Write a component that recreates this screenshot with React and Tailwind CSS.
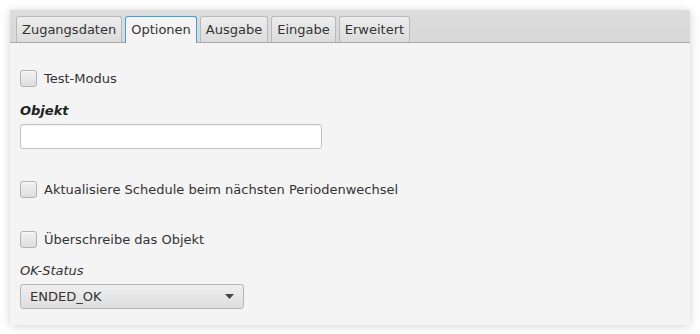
import { useState } from 'react';

const tabs = ['Zugangsdaten', 'Optionen', 'Ausgabe', 'Eingabe', 'Erweitert'];

function Checkbox({ label, className = '' }) {
  const [checked, setChecked] = useState(false);
  return (
    <label className={`flex items-center gap-[7px] cursor-pointer ${className}`}>
      <span
        onClick={() => setChecked(!checked)}
        className="w-[17px] h-[17px] rounded-[3px] border border-[#b2b2b2] bg-gradient-to-b from-[#f2f2f2] to-[#dedede] shadow-[inset_0_1px_0_#fafafa]"
      />
      <span className="text-[13px] leading-[16px] text-[#333]">{label}</span>
    </label>
  );
}

export default function App() {
  const [active, setActive] = useState('Optionen');

  return (
    <div className="w-[700px] h-[334px] bg-white p-[10px] font-['DejaVu_Sans',sans-serif]">
      <div className="h-[315px] w-[680px] bg-[#f4f4f4] shadow-[0_1px_9px_rgba(0,0,0,0.18)] flex flex-col">
        {/* TAB HEADER */}
        <div className="h-[33px] bg-gradient-to-b from-[#dddddd] to-[#d8d8d8] border-b border-[#a9a9a9] flex items-end pl-[6px] gap-[3px]">
          {tabs.map((t) => (
            <button
              key={t}
              onClick={() => setActive(t)}
              className={`h-[26px] px-[5px] rounded-t-[3px] text-[13px] leading-[16px] text-[#333] border ${
                active === t
                  ? 'bg-[#f4f4f4] border-[#39a0e4] border-b-0 -mb-px h-[27px]'
                  : 'bg-gradient-to-b from-[#ededed] to-[#dcdcdc] border-[#b9b9b9] border-b-0'
              }`}
            >
              {t}
            </button>
          ))}
        </div>

        {/* CONTENT */}
        <div className="flex flex-col items-start pl-[10px]">
          <Checkbox label="Test-Modus" className="mt-[27px]" />

          <div className="mt-[16px] text-[13px] leading-[16px] font-bold italic text-[#222]">Objekt</div>
          <input
            type="text"
            className="mt-[5px] w-[302px] h-[25px] bg-white border border-[#c2c2c2] rounded-[3px] shadow-[inset_0_1px_1px_rgba(0,0,0,0.06)] outline-none px-2 text-[13px]"
          />

          <Checkbox label="Aktualisiere Schedule beim nächsten Periodenwechsel" className="mt-[32px]" />
          <Checkbox label="Überschreibe das Objekt" className="mt-[33px]" />

          <div className="mt-[15px] text-[13px] leading-[16px] italic text-[#333]">OK-Status</div>
          <div className="mt-[5px] w-[224px] h-[25px] rounded-[3px] border border-[#b6b6b6] bg-gradient-to-b from-[#efefef] to-[#dedede] flex items-center justify-between pl-[9px] pr-[9px]">
            <span className="text-[13px] leading-[16px] text-[#333]">ENDED_OK</span>
            <svg width="9" height="5" viewBox="0 0 9 5">
              <path d="M0 0h9L4.5 5z" fill="#444" />
            </svg>
          </div>
        </div>
      </div>
    </div>
  );
}
